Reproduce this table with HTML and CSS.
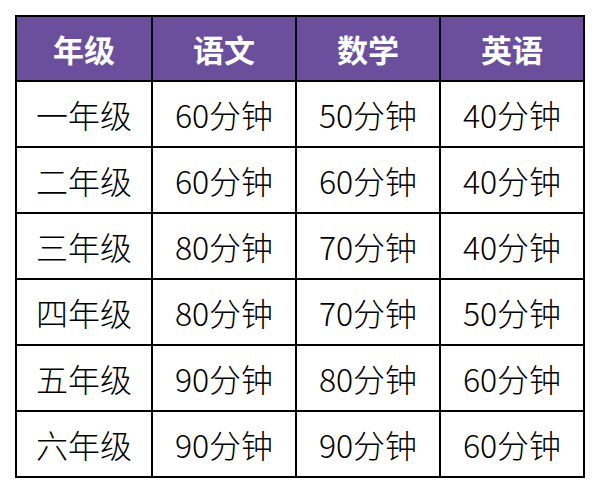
FILE: index.html
```html
<!DOCTYPE html>
<html lang="zh">
<head>
<meta charset="utf-8">
<link rel="stylesheet" href="styles.css">
</head>
<body>
<table class="schedule">
  <colgroup>
    <col class="c-grade">
    <col class="c-sub">
    <col class="c-sub">
    <col class="c-sub">
  </colgroup>
  <thead>
    <tr><th>年级</th><th>语文</th><th>数学</th><th>英语</th></tr>
  </thead>
  <tbody>
    <tr><td>一年级</td><td>60分钟</td><td>50分钟</td><td>40分钟</td></tr>
    <tr><td>二年级</td><td>60分钟</td><td>60分钟</td><td>40分钟</td></tr>
    <tr><td>三年级</td><td>80分钟</td><td>70分钟</td><td>40分钟</td></tr>
    <tr><td>四年级</td><td>80分钟</td><td>70分钟</td><td>50分钟</td></tr>
    <tr><td>五年级</td><td>90分钟</td><td>80分钟</td><td>60分钟</td></tr>
    <tr><td>六年级</td><td>90分钟</td><td>90分钟</td><td>60分钟</td></tr>
  </tbody>
</table>
</body>
</html>
```

FILE: styles.css
```css
html, body {
  margin: 0;
  padding: 0;
  background: #ffffff;
}

body {
  padding: 15px;
}

.schedule {
  border-collapse: collapse;
  table-layout: fixed;
  width: 570px;
  font-family: "Noto Sans CJK SC", "Noto Sans", sans-serif;
  color: #000000;
}

.c-grade { width: 136px; }
.c-sub { width: 144px; }

.schedule th,
.schedule td {
  border: 2px solid #000000;
  padding: 0;
  text-align: center;
  vertical-align: middle;
  line-height: 1;
}

.schedule th {
  height: 63px;
  background: #6b4f9c;
  color: #ffffff;
  font-size: 31px;
  font-weight: 700;
}

.schedule td {
  height: 64px;
  font-size: 32px;
  font-weight: 300;
}
```
